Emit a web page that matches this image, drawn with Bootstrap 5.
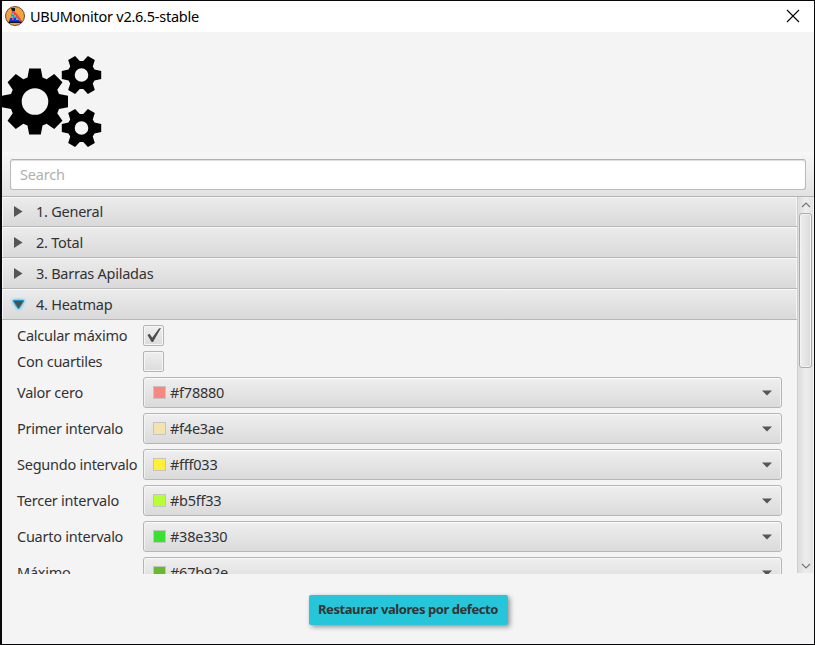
<!DOCTYPE html>
<html lang="es">
<head>
<meta charset="utf-8">
<meta name="viewport" content="width=device-width, initial-scale=1">
<title>UBUMonitor v2.6.5-stable</title>
<link href="https://cdn.jsdelivr.net/npm/bootstrap@5.3.0/dist/css/bootstrap.min.css" rel="stylesheet">
<style>
html,body{height:645px;overflow:hidden}
body{background:#08080c;font-family:"Noto Sans","Open Sans",sans-serif;font-size:14.5px;line-height:20px;color:#333;letter-spacing:-.25px}
.win{width:812px;height:643px;margin:1px 1px 1px 2px;background:#f4f4f4}
.title-bar{height:31px;background:#fff;color:#000;padding:0 14px 0 3px}
.title-bar svg{position:relative;top:-1px}
.title-text{font-size:14.5px;margin-left:5px;padding-bottom:2px}
.hero{height:120px}
.tool-area{height:45px;background:linear-gradient(#f7f7f7,#e2e2e2);border-bottom:1px solid #b4b4b4;padding:7px 8px 0 8px}
.tool-area .form-control{height:31px;border:1px solid #bababa;border-top-color:#b0b0b0;border-radius:3px;padding:0 9px 2px;font-size:14.5px;letter-spacing:-.2px;color:#333;box-shadow:inset 0 1px 1px #ddd}
.tool-area .form-control::placeholder{color:#b0b0b0}
.viewport{height:377px;overflow:hidden}
.pane-head{height:31px;background:linear-gradient(#ececec,#d9d9d9);border-bottom:1px solid #b7b7b7;box-shadow:inset 1px 1px #f8f8f8,inset -1px 0 #f4f4f4;padding-left:11px}
.pane-head:first-child{height:30px;padding-bottom:1px}
.pane-head svg{width:12px;height:12px;margin-right:11px;overflow:visible}
.open-arrow{filter:drop-shadow(0 0 1.5px #039ed3)}
.fields{padding:5px 15px 0}
.fields .label-cell{width:126px;white-space:nowrap;padding-bottom:2px}
.check-row{height:21px;margin-bottom:5px}
.box{width:21px;height:21px;border:1px solid #b5b5b5;border-radius:2px;background:linear-gradient(#efefef,#dcdcdc);box-shadow:inset 0 0 0 1px #f6f6f6}
.color-row{height:31px;margin-bottom:5px}
.picker{height:31px;border:1px solid #b5b5b5;border-radius:3px;background:linear-gradient(#efefef,#dadada);box-shadow:inset 0 1px #fafafa,inset 1px 0 #f2f2f2,inset -1px 0 #f2f2f2;padding:0 9px}
.hex{padding-bottom:2px}
.swatch{width:13px;height:13px;border:1px solid #c4c4c4;margin-right:4px}
.caret{margin-left:auto}
.scroll-track{width:16px;height:376px;margin-right:1px;background:linear-gradient(90deg,#dcdcdc,#ededed 50%,#e3e3e3);border-left:1px solid #cfcfcf;padding:5px 1px 4px 1px}
.thumb{width:13px;height:155px;margin-top:5px;border:1px solid #ababab;border-radius:3px;background:linear-gradient(90deg,#efefef,#dadada);box-shadow:inset 0 0 0 1px #f3f3f3}
.restore{width:199px;height:30px;background:#26c6da;border:0;border-radius:2px;color:#333;font-size:13px;font-weight:700;padding:0 0 2px;letter-spacing:-.43px;box-shadow:2px 2px 5px rgba(0,0,0,.4)}
.foot{padding-top:21px}
</style>
<script src="https://cdn.jsdelivr.net/npm/bootstrap@5.3.0/dist/js/bootstrap.bundle.min.js"></script>
</head>
<body>
<main class="win d-flex flex-column">
  <header class="title-bar d-flex align-items-center">
    <svg width="20" height="20" viewBox="0 0 20 20"><circle cx="10" cy="10" r="9.500" fill="#f5a33b" stroke="#53402d" stroke-width=".9"/><path d="M5 16L7 5h2l4 4 4 6v1z" fill="#ee4a3c"/><path d="M4 16l1-4h2v2h2v-2h2v2h3v2z" fill="#1236f0"/><path d="M7 7h2v2H7zM9 9h2v2H9zM6 10h2v2H6zM11 12h2v2h-2z" fill="#36c4d8"/><path d="M6 2h4v3H7zM3.500 15.500h13v1.500h-13z" fill="#17151b"/></svg>
    <span class="title-text">UBUMonitor v2.6.5-stable</span>
    <svg class="ms-auto" width="14" height="14" viewBox="0 0 14 14"><path d="M1 1l12 12M13 1L1 13" stroke="#000" stroke-width="1.1"/></svg>
  </header>
  <section class="hero"><svg id="gears" width="104" height="120" viewBox="0 0 104 120"></svg></section>
  <div class="tool-area"><input class="form-control" placeholder="Search" aria-label="Search"></div>
  <div class="d-flex">
    <div class="viewport flex-grow-1">
      <div class="pane-head d-flex align-items-center"><svg viewBox="0 0 12 12"><path d="M1 1v11L9.500 6.500z" fill="#555"/></svg>1. General</div>
      <div class="pane-head d-flex align-items-center"><svg viewBox="0 0 12 12"><path d="M1 1v11L9.500 6.500z" fill="#555"/></svg>2. Total</div>
      <div class="pane-head d-flex align-items-center"><svg viewBox="0 0 12 12"><path d="M1 1v11L9.500 6.500z" fill="#555"/></svg>3. Barras Apiladas</div>
      <div class="pane-head d-flex align-items-center"><svg class="open-arrow" viewBox="0 0 12 12"><path d="M0 2.500h11L5.500 11z" fill="#4c5054" stroke="#039ed3" stroke-width=".7"/></svg>4. Heatmap</div>
      <div class="fields" id="fields">
        <div class="check-row d-flex align-items-center"><span class="label-cell">Calcular máximo</span><span class="box"><svg class="d-block" width="19" height="19" viewBox="0 0 19 19"><path d="M3.500 9l2-1.200 2.700 4L15 2.500l2-.5L9 16H7.600z" fill="#4c4c4c"/></svg></span></div>
        <div class="check-row d-flex align-items-center"><span class="label-cell">Con cuartiles</span><span class="box"></span></div>
      </div>
    </div>
    <div class="scroll-track d-flex flex-column align-items-center">
      <svg width="10" height="6" viewBox="0 0 10 6"><path d="M1 5l4-4 4 4" fill="none" stroke="#777" stroke-width="1.200"/></svg>
      <div class="thumb"></div>
      <svg class="mt-auto" width="10" height="6" viewBox="0 0 10 6"><path d="M1 1l4 4 4-4" fill="none" stroke="#777" stroke-width="1.200"/></svg>
    </div>
  </div>
  <footer class="foot d-flex justify-content-center"><button class="restore">Restaurar valores por defecto</button></footer>
</main>
<script>
const rows=[["Valor cero","#f78880"],["Primer intervalo","#f4e3ae"],["Segundo intervalo","#fff033"],["Tercer intervalo","#b5ff33"],["Cuarto intervalo","#38e330"],["Máximo","#67b92e"]];
document.getElementById("fields").insertAdjacentHTML("beforeend",rows.map(([n,c])=>`<div class="color-row d-flex align-items-center"><span class="label-cell">${n}</span><div class="picker flex-grow-1 d-flex align-items-center"><span class="swatch" style="background:${c}"></span><span class="hex">${c}</span><svg class="caret" width="10" height="6" viewBox="0 0 10 6"><path d="M0 .5h10L5 5.500z" fill="#555"/></svg></div></div>`).join(""));
function gear(cx,cy,n,ro,ri,hole,start,wo,wi){
  let p="";
  for(let i=0;i<n;i++){
    const a=start+i*2*Math.PI/n;
    [[ri,-wi],[ro,-wo],[ro,wo],[ri,wi]].forEach(([r,w])=>{
      const x=cx+r*Math.cos(a)-w*Math.sin(a), y=cy+r*Math.sin(a)+w*Math.cos(a);
      p+=(p?"L":"M")+x.toFixed(2)+" "+y.toFixed(2);
    });
  }
  return `<path fill-rule="evenodd" d="${p}ZM${cx-hole} ${cy}a${hole} ${hole} 0 1 0 ${2*hole} 0a${hole} ${hole} 0 1 0 ${-2*hole} 0Z"/>`;
}
document.getElementById("gears").innerHTML=gear(33,69.5,8,33,24,13.3,0,5.8,7.5)+gear(79.5,43,6,19.7,13,6.8,0,4,5.5)+gear(79.5,96,6,19.7,13,6.8,0,4,5.5);
</script>
</body>
</html>
